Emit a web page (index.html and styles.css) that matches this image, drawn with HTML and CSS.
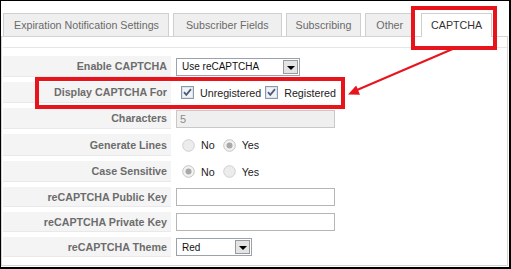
FILE: index.html
```html
<!DOCTYPE html>
<html>
<head>
<meta charset="utf-8">
<link rel="stylesheet" href="styles.css">
</head>
<body>
<div class="frame">
  <div class="tabs">
    <div class="tab t1">Expiration Notification Settings</div>
    <div class="tab t2">Subscriber Fields</div>
    <div class="tab t3">Subscribing</div>
    <div class="tab t4">Other</div>
    <div class="tab t5 active">CAPTCHA</div>
  </div>
  <div class="panel">
    <div class="form">
      <div class="row r21">
        <div class="label">Enable CAPTCHA</div>
        <div class="value">
          <div class="select wide"><span class="sel-text">Use reCAPTCHA</span><span class="sel-btn"><span class="tri"></span></span></div>
        </div>
      </div>
      <div class="row r21">
        <div class="label">Display CAPTCHA For</div>
        <div class="value">
          <span class="opt check">
            <svg class="box" width="13" height="13" viewBox="0 0 13 13"><rect x="0.5" y="0.5" width="12" height="12" fill="#f3f3f6" stroke="#8a98ad"/><rect x="1.5" y="1.5" width="10" height="10" fill="none" stroke="#dfe3ea"/><path d="M3 6.2 L5.3 8.8 L10 3.2" fill="none" stroke="#4b5d7e" stroke-width="1.8"/></svg>
            <span class="opt-text">Unregistered</span>
          </span>
          <span class="opt check">
            <svg class="box" width="13" height="13" viewBox="0 0 13 13"><rect x="0.5" y="0.5" width="12" height="12" fill="#f3f3f6" stroke="#8a98ad"/><rect x="1.5" y="1.5" width="10" height="10" fill="none" stroke="#dfe3ea"/><path d="M3 6.2 L5.3 8.8 L10 3.2" fill="none" stroke="#4b5d7e" stroke-width="1.8"/></svg>
            <span class="opt-text">Registered</span>
          </span>
        </div>
      </div>
      <div class="row r21">
        <div class="label">Characters</div>
        <div class="value"><div class="input disabled">5</div></div>
      </div>
      <div class="row r22">
        <div class="label">Generate Lines</div>
        <div class="value">
          <span class="opt rad">
            <svg class="radio" width="13" height="13" viewBox="0 0 13 13"><circle cx="6.5" cy="6.5" r="5.8" fill="#ececec" stroke="#d0d0d0"/></svg>
            <span class="opt-text">No</span>
          </span>
          <span class="opt rad">
            <svg class="radio" width="13" height="13" viewBox="0 0 13 13"><circle cx="6.5" cy="6.5" r="5.8" fill="#f2f2f2" stroke="#c4c4c4"/><circle cx="6.5" cy="6.5" r="3" fill="#a8a8a8"/></svg>
            <span class="opt-text">Yes</span>
          </span>
        </div>
      </div>
      <div class="row r21">
        <div class="label">Case Sensitive</div>
        <div class="value">
          <span class="opt rad">
            <svg class="radio" width="13" height="13" viewBox="0 0 13 13"><circle cx="6.5" cy="6.5" r="5.8" fill="#f2f2f2" stroke="#c4c4c4"/><circle cx="6.5" cy="6.5" r="3" fill="#a8a8a8"/></svg>
            <span class="opt-text">No</span>
          </span>
          <span class="opt rad">
            <svg class="radio" width="13" height="13" viewBox="0 0 13 13"><circle cx="6.5" cy="6.5" r="5.8" fill="#ececec" stroke="#d0d0d0"/></svg>
            <span class="opt-text">Yes</span>
          </span>
        </div>
      </div>
      <div class="row r20">
        <div class="label">reCAPTCHA Public Key</div>
        <div class="value"><div class="input"></div></div>
      </div>
      <div class="row r20">
        <div class="label">reCAPTCHA Private Key</div>
        <div class="value"><div class="input"></div></div>
      </div>
      <div class="row r20">
        <div class="label">reCAPTCHA Theme</div>
        <div class="value">
          <div class="select narrow"><span class="sel-text">Red</span><span class="sel-btn"><span class="tri"></span></span></div>
        </div>
      </div>
    </div>
  </div>

  <div class="callout callout-tab"></div>
  <div class="callout callout-row"></div>
  <svg class="arrow" width="511" height="269" viewBox="0 0 511 269">
    <line x1="455" y1="48" x2="357" y2="90" stroke="#e8141c" stroke-width="2"/>
    <polygon points="348,94.5 360,94.8 356.2,85.6" fill="#e8141c"/>
  </svg>
</div>
</body>
</html>
```

FILE: styles.css
```css
* { box-sizing: border-box; }
html, body { margin: 0; padding: 0; background: #fff; }

.frame {
  position: relative;
  width: 511px;
  height: 269px;
  border-top: 1px solid #000;
  border-left: 1px solid #000;
  border-right: 2px solid #000;
  border-bottom: 2px solid #000;
  background: #fff;
  font-family: "Liberation Sans", Arial, sans-serif;
  display: flex;
  flex-direction: column;
  overflow: hidden;
}

.tabs {
  display: flex;
  align-items: flex-end;
  gap: 4px;
  padding: 12px 0 0 2px;
  height: 35px;
}

.tab {
  height: 23px;
  border: 1px solid #cfcfcf;
  border-bottom: none;
  background: #efefef;
  color: #6a6a6a;
  font-size: 10.7px;
  line-height: 22px;
  padding: 0 10px;
  white-space: nowrap;
}
.tab.t1 { padding: 0 9px 0 10px; }
.tab.t2 { padding: 0 12px; }
.tab.t3 { padding: 0 9px; }
.tab.t4 { padding: 0 10px; }
.tab.active {
  background: #fff;
  color: #333;
  height: 24px;
  margin-left: 3px;
  padding: 0 9px 1px 9px;
  position: relative;
  z-index: 1;
  margin-bottom: -1px;
}

.panel {
  flex: 1;
  margin: 0 1px 1px 0;
  border: 1px solid #d4d4d4;
  padding: 10px 0 0 1px;
}

.form {
  border-top: 1px solid #e6e6e6;
  padding-top: 8px;
  display: flex;
  flex-direction: column;
  gap: 5px;
}

.row {
  display: flex;
  align-items: stretch;
}
.row.r20 { height: 20px; }
.row.r21 { height: 21px; }
.row.r22 { height: 22px; }

.label {
  width: 168px;
  flex: none;
  background: #f4f4f4;
  border-bottom: 1px solid #e9e9e9;
  color: #6c6c6c;
  font-weight: bold;
  font-size: 10.7px;
  text-align: right;
  padding-right: 4px;
  display: flex;
  align-items: center;
  justify-content: flex-end;
  white-space: nowrap;
}

.value {
  padding-left: 5px;
  display: flex;
  align-items: center;
  font-size: 10.7px;
  color: #222;
}

.select {
  height: 18px;
  border: 1px solid #9aa3ad;
  background: #fff;
  display: flex;
  align-items: center;
  justify-content: space-between;
  padding: 0 1px 0 5px;
}
.select.wide { width: 124px; }
.select.narrow { width: 76px; }
.sel-text { font-size: 10px; color: #111; }
.sel-btn {
  width: 15px;
  height: 14px;
  background: #e4e4e4;
  border: 1px solid #9a9a9a;
  display: flex;
  align-items: center;
  justify-content: center;
}
.tri {
  width: 0;
  height: 0;
  border-left: 4px solid transparent;
  border-right: 4px solid transparent;
  border-top: 4px solid #000;
  margin-top: 2px;
}

.opt {
  display: inline-flex;
  align-items: center;
}
.opt.check .box { margin: 0 6px 0 5px; }
.opt.check + .opt.check .box { margin-left: 4px; }
.opt.rad .radio { margin: 0 6px 0 6px; }
.opt.rad + .opt.rad .radio { margin-left: 8px; }
.opt-text { color: #222; }

.input {
  width: 159px;
  height: 18px;
  border: 1px solid #b5b5b5;
  background: #fff;
  font-size: 11px;
  padding-left: 3px;
  line-height: 16px;
}
.input.disabled {
  background: #efefef;
  border-color: #c8c8c8;
  color: #8a8a8a;
}

.callout {
  position: absolute;
  border: 4px solid #e8141c;
  pointer-events: none;
}
.callout-tab { left: 410px; top: 5px; width: 86px; height: 44px; }
.callout-row { left: 34px; top: 76px; width: 310px; height: 32px; }

.arrow {
  position: absolute;
  left: -1px;
  top: -1px;
  pointer-events: none;
}
```
